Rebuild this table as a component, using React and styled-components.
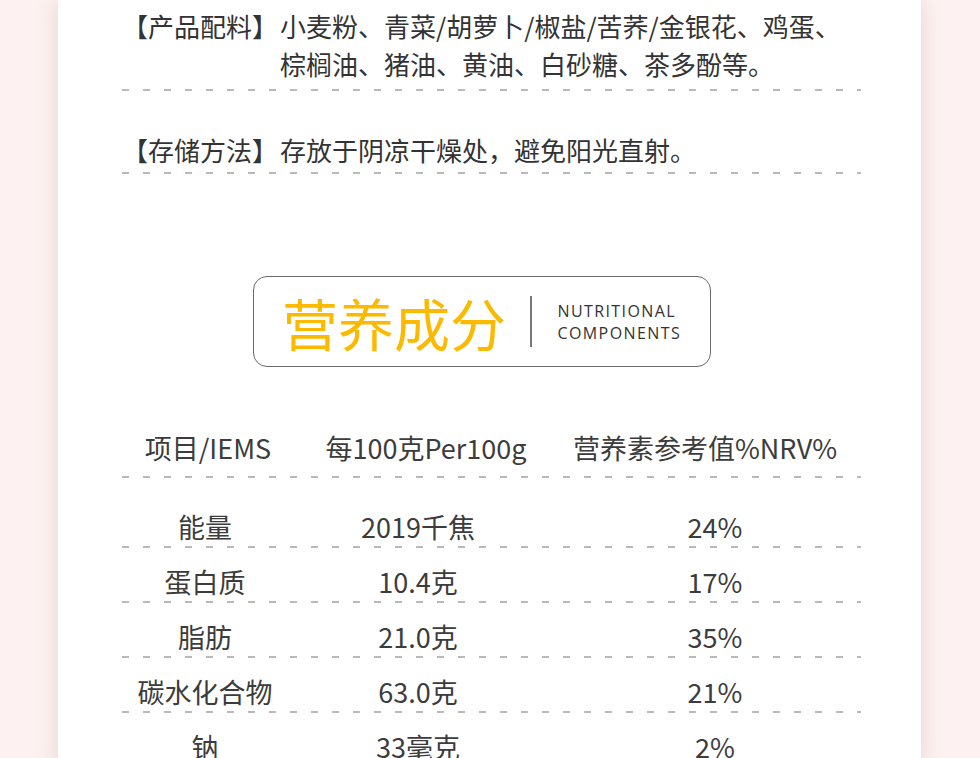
import React from "react";
import styled, { createGlobalStyle } from "styled-components";

const GlobalStyle = createGlobalStyle`
    html, body {
        margin: 0;
        padding: 0;
        background: #fdf2f1;
    }
    #root {
        height: 758px;
        overflow: hidden;
    }
`;

const dashed = `repeating-linear-gradient(to right, #b9b9b9 0 7px, transparent 7px 21px)`;

const Page = styled.div`
    height: 758px;
    background: #fdf2f1;
    padding-left: 58px;
`;

const Panel = styled.main`
    width: 863px;
    min-height: 100%;
    background: #fff;
    box-shadow: 0 0 22px rgba(120, 80, 80, 0.18);
    padding: 7px 60px 0 64px;
    box-sizing: border-box;
    font-family: "Noto Sans CJK SC", "Noto Sans", sans-serif;
    color: #333;
`;

const Dash = styled.div`
    height: 2px;
    width: 739px;
    margin-top: ${(p) => p.$top}px;
    background: ${dashed};
`;

const Info = styled.div`
    display: flex;
    font-size: 26px;
    line-height: 38px;
    margin-top: ${(p) => p.$top || 0}px;
`;

const Label = styled.span`
    flex: none;
    width: 158px;
`;

const Value = styled.span`
    flex: 1;
    white-space: nowrap;
`;

const TitleBox = styled.div`
    margin: 102px 0 0 131px;
    width: 458px;
    height: 91px;
    box-sizing: border-box;
    border: 1.5px solid #6a6a6a;
    border-radius: 14px;
    display: flex;
    align-items: center;
    padding-left: 28px;
`;

const TitleCn = styled.div`
    font-size: 56px;
    line-height: 1;
    color: #fbb900;
`;

const Divider = styled.div`
    width: 1.5px;
    height: 51px;
    background: #777;
    margin: 0 26px 0 24px;
`;

const TitleEn = styled.div`
    font-family: "Open Sans", "Liberation Sans", sans-serif;
    font-size: 16px;
    line-height: 22px;
    letter-spacing: 1.4px;
    color: #333;
`;

const Row = styled.div`
    display: grid;
    grid-template-columns: ${(p) => p.$cols};
    font-size: 27px;
    line-height: 36px;
    color: #3c3c3c;
    padding: ${(p) => p.$pad};
    margin-top: ${(p) => p.$top || 0}px;
    background: ${dashed} bottom left / 739px 2px no-repeat;
    width: 739px;
`;

const Cell = styled.div`
    text-align: center;
    white-space: nowrap;
    padding-left: ${(p) => p.$shift || 0}px;
`;

const HEAD_COLS = "172px 264px 294px";
const DATA_COLS = "166px 260px 313px";

const rows = [
    ["能量", "2019千焦", "24%"],
    ["蛋白质", "10.4克", "17%"],
    ["脂肪", "21.0克", "35%"],
    ["碳水化合物", "63.0克", "21%"],
    ["钠", "33毫克", "2%"],
];

const App = () => {
    return (
        <Page>
            <GlobalStyle />
            <Panel>
                <Info>
                    <Label>【产品配料】</Label>
                    <Value>
                        小麦粉、青菜/胡萝卜/椒盐/苦荞/金银花、鸡蛋、
                        <br />
                        棕榈油、猪油、黄油、白砂糖、茶多酚等。
                    </Value>
                </Info>
                <Dash $top={6} />
                <Info $top={40}>
                    <Label>【存储方法】</Label>
                    <Value>存放于阴凉干燥处，避免阳光直射。</Value>
                </Info>
                <Dash $top={3} />

                <TitleBox>
                    <TitleCn>营养成分</TitleCn>
                    <Divider />
                    <TitleEn>
                        NUTRITIONAL
                        <br />
                        COMPONENTS
                    </TitleEn>
                </TitleBox>

                <Row $cols={HEAD_COLS} $top={63} $pad="0 0 12px">
                    <Cell>项目/IEMS</Cell>
                    <Cell>每100克Per100g</Cell>
                    <Cell>营养素参考值%NRV%</Cell>
                </Row>
                {rows.map((r, i) => (
                    <Row key={i} $cols={DATA_COLS} $top={i === 0 ? 15 : 0} $pad="16px 0 3px">
                        <Cell>{r[0]}</Cell>
                        <Cell>{r[1]}</Cell>
                        <Cell $shift={21}>{r[2]}</Cell>
                    </Row>
                ))}
            </Panel>
        </Page>
    );
};

export default App;
